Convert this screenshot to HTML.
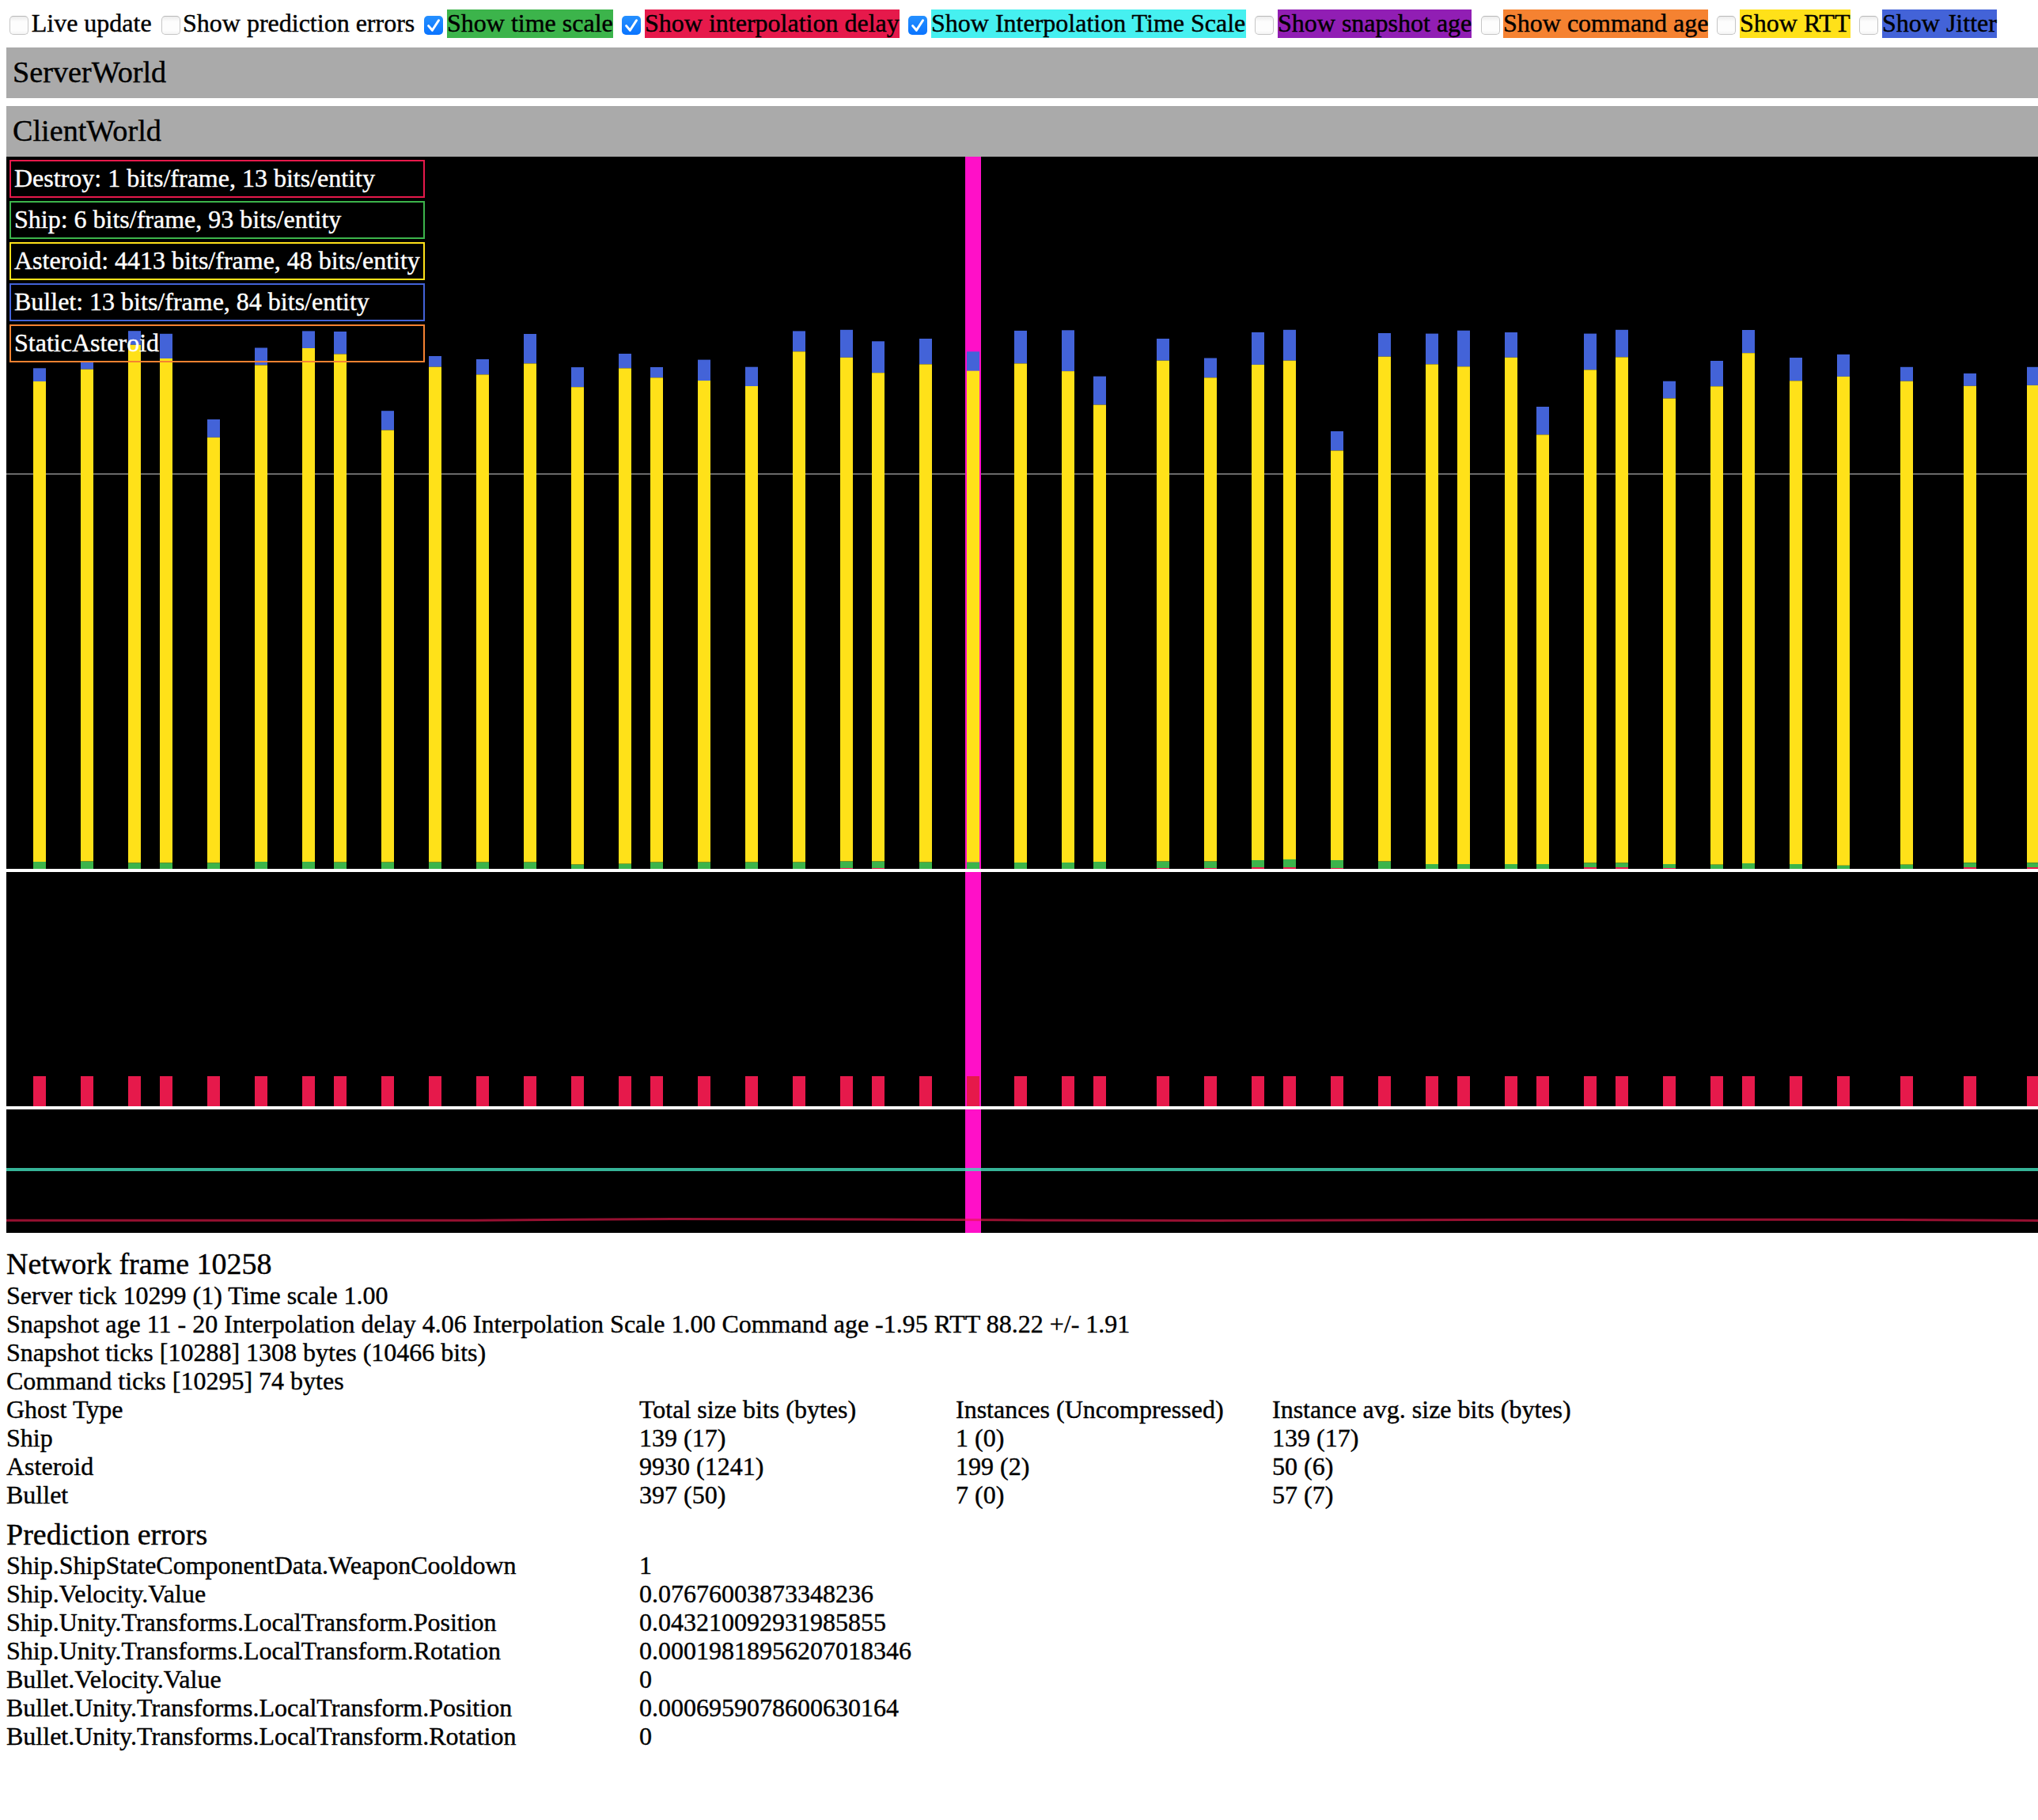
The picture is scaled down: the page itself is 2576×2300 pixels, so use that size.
<!DOCTYPE html>
<html><head><meta charset="utf-8"><title>NetDbg</title>
<style>
html,body{margin:0;padding:0;background:#fff;}
body{width:2576px;height:2300px;position:relative;overflow:hidden;font-family:"Liberation Serif",serif;font-size:32px;color:#000;-webkit-text-stroke:0.4px currentColor;}
.cb{position:absolute;top:20px;width:24px;height:24px;box-sizing:border-box;border-radius:5px;border:1px solid #c6c6c6;border-top-color:#b9b9b9;background:linear-gradient(#ececec,#fdfdfd 30%,#fdfdfd 80%,#f4f4f4);}
.cb.on{border:none;background:linear-gradient(#2590ff,#0a74ff);}
.cb svg{display:block}
.lab{position:absolute;top:12px;height:36px;line-height:34px;white-space:pre;}
.world{position:absolute;left:8px;width:2568px;height:64px;background:#aaaaaa;}
.world span{position:absolute;left:8px;top:9px;font-size:38.2px;line-height:44px;white-space:pre;}
.leg{position:absolute;left:12px;width:525px;height:48px;box-sizing:border-box;border:2px solid;color:#fff;}
.leg span{position:absolute;left:4px;top:3px;line-height:36px;white-space:pre;}
.t{position:absolute;white-space:pre;}
</style></head>
<body>
<div class="cb" style="left:12px"></div>
<div class="lab" style="left:39.7px;">Live update</div>
<div class="cb" style="left:204px"></div>
<div class="lab" style="left:231px;">Show prediction errors</div>
<div class="cb on" style="left:536px"><svg width="24" height="24" viewBox="0 0 24 24"><path d="M5.6 12.6 L10.4 18.3 L18.5 5.8" fill="none" stroke="#fff" stroke-width="3" stroke-linecap="round" stroke-linejoin="round"/></svg></div>
<div class="lab" style="left:565px;background:#3cb44b;width:210px;">Show time scale</div>
<div class="cb on" style="left:786px"><svg width="24" height="24" viewBox="0 0 24 24"><path d="M5.6 12.6 L10.4 18.3 L18.5 5.8" fill="none" stroke="#fff" stroke-width="3" stroke-linecap="round" stroke-linejoin="round"/></svg></div>
<div class="lab" style="left:815px;background:#e6194b;width:322px;">Show interpolation delay</div>
<div class="cb on" style="left:1148px"><svg width="24" height="24" viewBox="0 0 24 24"><path d="M5.6 12.6 L10.4 18.3 L18.5 5.8" fill="none" stroke="#fff" stroke-width="3" stroke-linecap="round" stroke-linejoin="round"/></svg></div>
<div class="lab" style="left:1177px;background:#46f0f0;width:398px;">Show Interpolation Time Scale</div>
<div class="cb" style="left:1586px"></div>
<div class="lab" style="left:1615px;background:#911eb4;width:245px;">Show snapshot age</div>
<div class="cb" style="left:1872px"></div>
<div class="lab" style="left:1900px;background:#f58231;width:259px;">Show command age</div>
<div class="cb" style="left:2170px"></div>
<div class="lab" style="left:2199px;background:#ffe119;width:140px;">Show RTT</div>
<div class="cb" style="left:2350px"></div>
<div class="lab" style="left:2379px;background:#4363d8;width:145px;">Show Jitter</div>
<div class="world" style="top:60px"><span>ServerWorld</span></div>
<div class="world" style="top:134px"><span>ClientWorld</span></div>
<svg width="2568" height="1360" viewBox="8 198 2568 1360" style="position:absolute;left:8px;top:198px;display:block">
<rect x="8" y="198" width="2568" height="1360" fill="#000"/>
<rect x="8" y="598" width="2568" height="2" fill="#6a6a6a"/>
<rect x="1220" y="198" width="20" height="1360" fill="#ff10c8"/>
<rect x="42" y="465.3" width="16" height="16.7" fill="#4363d8"/>
<rect x="42" y="482" width="16" height="607.0" fill="#ffe119"/>
<rect x="42" y="1089" width="16" height="9.0" fill="#3cb44b"/>
<rect x="42" y="1360" width="16" height="38" fill="#e6194b"/>
<rect x="102" y="456" width="16" height="10.7" fill="#4363d8"/>
<rect x="102" y="466.7" width="16" height="621.9" fill="#ffe119"/>
<rect x="102" y="1088.6" width="16" height="9.4" fill="#3cb44b"/>
<rect x="102" y="1360" width="16" height="38" fill="#e6194b"/>
<rect x="162" y="418.2" width="16" height="17.6" fill="#4363d8"/>
<rect x="162" y="435.8" width="16" height="654.7" fill="#ffe119"/>
<rect x="162" y="1090.5" width="16" height="7.5" fill="#3cb44b"/>
<rect x="162" y="1360" width="16" height="38" fill="#e6194b"/>
<rect x="202" y="421.8" width="16" height="31.2" fill="#4363d8"/>
<rect x="202" y="453" width="16" height="637.5" fill="#ffe119"/>
<rect x="202" y="1090.5" width="16" height="7.5" fill="#3cb44b"/>
<rect x="202" y="1360" width="16" height="38" fill="#e6194b"/>
<rect x="262" y="530" width="16" height="22.8" fill="#4363d8"/>
<rect x="262" y="552.8" width="16" height="537.7" fill="#ffe119"/>
<rect x="262" y="1090.5" width="16" height="7.5" fill="#3cb44b"/>
<rect x="262" y="1360" width="16" height="38" fill="#e6194b"/>
<rect x="322" y="439.5" width="16" height="22.0" fill="#4363d8"/>
<rect x="322" y="461.5" width="16" height="627.5" fill="#ffe119"/>
<rect x="322" y="1089" width="16" height="9.0" fill="#3cb44b"/>
<rect x="322" y="1360" width="16" height="38" fill="#e6194b"/>
<rect x="382" y="418.4" width="16" height="21.6" fill="#4363d8"/>
<rect x="382" y="440" width="16" height="649.0" fill="#ffe119"/>
<rect x="382" y="1089" width="16" height="9.0" fill="#3cb44b"/>
<rect x="382" y="1360" width="16" height="38" fill="#e6194b"/>
<rect x="422" y="419" width="16" height="28.5" fill="#4363d8"/>
<rect x="422" y="447.5" width="16" height="642.1" fill="#ffe119"/>
<rect x="422" y="1089.6" width="16" height="8.4" fill="#3cb44b"/>
<rect x="422" y="1360" width="16" height="38" fill="#e6194b"/>
<rect x="482" y="519.2" width="16" height="24.4" fill="#4363d8"/>
<rect x="482" y="543.6" width="16" height="546.0" fill="#ffe119"/>
<rect x="482" y="1089.6" width="16" height="8.4" fill="#3cb44b"/>
<rect x="482" y="1360" width="16" height="38" fill="#e6194b"/>
<rect x="542" y="450" width="16" height="13.7" fill="#4363d8"/>
<rect x="542" y="463.7" width="16" height="625.9" fill="#ffe119"/>
<rect x="542" y="1089.6" width="16" height="8.4" fill="#3cb44b"/>
<rect x="542" y="1360" width="16" height="38" fill="#e6194b"/>
<rect x="602" y="454" width="16" height="19.4" fill="#4363d8"/>
<rect x="602" y="473.4" width="16" height="616.2" fill="#ffe119"/>
<rect x="602" y="1089.6" width="16" height="8.4" fill="#3cb44b"/>
<rect x="602" y="1360" width="16" height="38" fill="#e6194b"/>
<rect x="662" y="422" width="16" height="37.4" fill="#4363d8"/>
<rect x="662" y="459.4" width="16" height="630.2" fill="#ffe119"/>
<rect x="662" y="1089.6" width="16" height="8.4" fill="#3cb44b"/>
<rect x="662" y="1360" width="16" height="38" fill="#e6194b"/>
<rect x="722" y="464.1" width="16" height="25.1" fill="#4363d8"/>
<rect x="722" y="489.2" width="16" height="603.4" fill="#ffe119"/>
<rect x="722" y="1092.6" width="16" height="5.4" fill="#3cb44b"/>
<rect x="722" y="1360" width="16" height="38" fill="#e6194b"/>
<rect x="782" y="447" width="16" height="18.4" fill="#4363d8"/>
<rect x="782" y="465.4" width="16" height="626.3" fill="#ffe119"/>
<rect x="782" y="1091.7" width="16" height="6.3" fill="#3cb44b"/>
<rect x="782" y="1360" width="16" height="38" fill="#e6194b"/>
<rect x="822" y="464" width="16" height="13.3" fill="#4363d8"/>
<rect x="822" y="477.3" width="16" height="612.3" fill="#ffe119"/>
<rect x="822" y="1089.6" width="16" height="8.4" fill="#3cb44b"/>
<rect x="822" y="1360" width="16" height="38" fill="#e6194b"/>
<rect x="882" y="454.6" width="16" height="26.4" fill="#4363d8"/>
<rect x="882" y="481" width="16" height="608.6" fill="#ffe119"/>
<rect x="882" y="1089.6" width="16" height="8.4" fill="#3cb44b"/>
<rect x="882" y="1360" width="16" height="38" fill="#e6194b"/>
<rect x="942" y="463.7" width="16" height="24.3" fill="#4363d8"/>
<rect x="942" y="488" width="16" height="601.6" fill="#ffe119"/>
<rect x="942" y="1089.6" width="16" height="8.4" fill="#3cb44b"/>
<rect x="942" y="1360" width="16" height="38" fill="#e6194b"/>
<rect x="1002" y="418.4" width="16" height="25.9" fill="#4363d8"/>
<rect x="1002" y="444.3" width="16" height="645.3" fill="#ffe119"/>
<rect x="1002" y="1089.6" width="16" height="8.4" fill="#3cb44b"/>
<rect x="1002" y="1360" width="16" height="38" fill="#e6194b"/>
<rect x="1062" y="416.8" width="16" height="35.0" fill="#4363d8"/>
<rect x="1062" y="451.8" width="16" height="636.8" fill="#ffe119"/>
<rect x="1062" y="1088.6" width="16" height="8.4" fill="#3cb44b"/>
<rect x="1062" y="1097" width="16" height="1.0" fill="#e6194b"/>
<rect x="1062" y="1360" width="16" height="38" fill="#e6194b"/>
<rect x="1102" y="431.3" width="16" height="39.9" fill="#4363d8"/>
<rect x="1102" y="471.2" width="16" height="617.4" fill="#ffe119"/>
<rect x="1102" y="1088.6" width="16" height="8.4" fill="#3cb44b"/>
<rect x="1102" y="1097" width="16" height="1.0" fill="#e6194b"/>
<rect x="1102" y="1360" width="16" height="38" fill="#e6194b"/>
<rect x="1162" y="428" width="16" height="32.4" fill="#4363d8"/>
<rect x="1162" y="460.4" width="16" height="629.2" fill="#ffe119"/>
<rect x="1162" y="1089.6" width="16" height="8.4" fill="#3cb44b"/>
<rect x="1162" y="1360" width="16" height="38" fill="#e6194b"/>
<rect x="1222" y="444.3" width="16" height="24.4" fill="#4363d8"/>
<rect x="1222" y="468.7" width="16" height="620.9" fill="#ffe119"/>
<rect x="1222" y="1089.6" width="16" height="8.4" fill="#3cb44b"/>
<rect x="1222" y="1360" width="16" height="38" fill="#e6194b"/>
<rect x="1282" y="417.9" width="16" height="41.5" fill="#4363d8"/>
<rect x="1282" y="459.4" width="16" height="630.6" fill="#ffe119"/>
<rect x="1282" y="1090" width="16" height="8.0" fill="#3cb44b"/>
<rect x="1282" y="1360" width="16" height="38" fill="#e6194b"/>
<rect x="1342" y="417.3" width="16" height="51.8" fill="#4363d8"/>
<rect x="1342" y="469.1" width="16" height="620.9" fill="#ffe119"/>
<rect x="1342" y="1090" width="16" height="8.0" fill="#3cb44b"/>
<rect x="1342" y="1360" width="16" height="38" fill="#e6194b"/>
<rect x="1382" y="475.6" width="16" height="36.0" fill="#4363d8"/>
<rect x="1382" y="511.6" width="16" height="577.4" fill="#ffe119"/>
<rect x="1382" y="1089" width="16" height="9.0" fill="#3cb44b"/>
<rect x="1382" y="1360" width="16" height="38" fill="#e6194b"/>
<rect x="1462" y="428" width="16" height="27.7" fill="#4363d8"/>
<rect x="1462" y="455.7" width="16" height="632.9" fill="#ffe119"/>
<rect x="1462" y="1088.6" width="16" height="8.4" fill="#3cb44b"/>
<rect x="1462" y="1097" width="16" height="1.0" fill="#e6194b"/>
<rect x="1462" y="1360" width="16" height="38" fill="#e6194b"/>
<rect x="1522" y="452.5" width="16" height="24.8" fill="#4363d8"/>
<rect x="1522" y="477.3" width="16" height="611.3" fill="#ffe119"/>
<rect x="1522" y="1088.6" width="16" height="8.4" fill="#3cb44b"/>
<rect x="1522" y="1097" width="16" height="1.0" fill="#e6194b"/>
<rect x="1522" y="1360" width="16" height="38" fill="#e6194b"/>
<rect x="1582" y="419.9" width="16" height="41.0" fill="#4363d8"/>
<rect x="1582" y="460.9" width="16" height="626.1" fill="#ffe119"/>
<rect x="1582" y="1087" width="16" height="9.0" fill="#3cb44b"/>
<rect x="1582" y="1096" width="16" height="2.0" fill="#e6194b"/>
<rect x="1582" y="1360" width="16" height="38" fill="#e6194b"/>
<rect x="1622" y="416.8" width="16" height="38.9" fill="#4363d8"/>
<rect x="1622" y="455.7" width="16" height="630.3" fill="#ffe119"/>
<rect x="1622" y="1086" width="16" height="10.0" fill="#3cb44b"/>
<rect x="1622" y="1096" width="16" height="2.0" fill="#e6194b"/>
<rect x="1622" y="1360" width="16" height="38" fill="#e6194b"/>
<rect x="1682" y="545" width="16" height="24.5" fill="#4363d8"/>
<rect x="1682" y="569.5" width="16" height="517.5" fill="#ffe119"/>
<rect x="1682" y="1087" width="16" height="10.0" fill="#3cb44b"/>
<rect x="1682" y="1097" width="16" height="1.0" fill="#e6194b"/>
<rect x="1682" y="1360" width="16" height="38" fill="#e6194b"/>
<rect x="1742" y="421" width="16" height="29.7" fill="#4363d8"/>
<rect x="1742" y="450.7" width="16" height="637.9" fill="#ffe119"/>
<rect x="1742" y="1088.6" width="16" height="9.4" fill="#3cb44b"/>
<rect x="1742" y="1360" width="16" height="38" fill="#e6194b"/>
<rect x="1802" y="421.6" width="16" height="38.8" fill="#4363d8"/>
<rect x="1802" y="460.4" width="16" height="631.6" fill="#ffe119"/>
<rect x="1802" y="1092" width="16" height="6.0" fill="#3cb44b"/>
<rect x="1802" y="1360" width="16" height="38" fill="#e6194b"/>
<rect x="1842" y="417.7" width="16" height="45.6" fill="#4363d8"/>
<rect x="1842" y="463.3" width="16" height="628.7" fill="#ffe119"/>
<rect x="1842" y="1092" width="16" height="6.0" fill="#3cb44b"/>
<rect x="1842" y="1360" width="16" height="38" fill="#e6194b"/>
<rect x="1902" y="420" width="16" height="31.8" fill="#4363d8"/>
<rect x="1902" y="451.8" width="16" height="640.2" fill="#ffe119"/>
<rect x="1902" y="1092" width="16" height="6.0" fill="#3cb44b"/>
<rect x="1902" y="1360" width="16" height="38" fill="#e6194b"/>
<rect x="1942" y="514" width="16" height="35.4" fill="#4363d8"/>
<rect x="1942" y="549.4" width="16" height="542.6" fill="#ffe119"/>
<rect x="1942" y="1092" width="16" height="6.0" fill="#3cb44b"/>
<rect x="1942" y="1360" width="16" height="38" fill="#e6194b"/>
<rect x="2002" y="421.6" width="16" height="45.8" fill="#4363d8"/>
<rect x="2002" y="467.4" width="16" height="623.1" fill="#ffe119"/>
<rect x="2002" y="1090.5" width="16" height="5.5" fill="#3cb44b"/>
<rect x="2002" y="1096" width="16" height="2.0" fill="#e6194b"/>
<rect x="2002" y="1360" width="16" height="38" fill="#e6194b"/>
<rect x="2042" y="416.8" width="16" height="34.6" fill="#4363d8"/>
<rect x="2042" y="451.4" width="16" height="639.1" fill="#ffe119"/>
<rect x="2042" y="1090.5" width="16" height="5.5" fill="#3cb44b"/>
<rect x="2042" y="1096" width="16" height="2.0" fill="#e6194b"/>
<rect x="2042" y="1360" width="16" height="38" fill="#e6194b"/>
<rect x="2102" y="481.7" width="16" height="21.8" fill="#4363d8"/>
<rect x="2102" y="503.5" width="16" height="588.5" fill="#ffe119"/>
<rect x="2102" y="1092" width="16" height="5.0" fill="#3cb44b"/>
<rect x="2102" y="1097" width="16" height="1.0" fill="#e6194b"/>
<rect x="2102" y="1360" width="16" height="38" fill="#e6194b"/>
<rect x="2162" y="456" width="16" height="32.3" fill="#4363d8"/>
<rect x="2162" y="488.3" width="16" height="604.4" fill="#ffe119"/>
<rect x="2162" y="1092.7" width="16" height="5.3" fill="#3cb44b"/>
<rect x="2162" y="1360" width="16" height="38" fill="#e6194b"/>
<rect x="2202" y="417" width="16" height="29.2" fill="#4363d8"/>
<rect x="2202" y="446.2" width="16" height="644.8" fill="#ffe119"/>
<rect x="2202" y="1091" width="16" height="7.0" fill="#3cb44b"/>
<rect x="2202" y="1360" width="16" height="38" fill="#e6194b"/>
<rect x="2262" y="452" width="16" height="29.3" fill="#4363d8"/>
<rect x="2262" y="481.3" width="16" height="610.7" fill="#ffe119"/>
<rect x="2262" y="1092" width="16" height="6.0" fill="#3cb44b"/>
<rect x="2262" y="1360" width="16" height="38" fill="#e6194b"/>
<rect x="2322" y="447.9" width="16" height="28.0" fill="#4363d8"/>
<rect x="2322" y="475.9" width="16" height="617.9" fill="#ffe119"/>
<rect x="2322" y="1093.8" width="16" height="4.2" fill="#3cb44b"/>
<rect x="2322" y="1360" width="16" height="38" fill="#e6194b"/>
<rect x="2402" y="463.8" width="16" height="17.9" fill="#4363d8"/>
<rect x="2402" y="481.7" width="16" height="611.0" fill="#ffe119"/>
<rect x="2402" y="1092.7" width="16" height="5.3" fill="#3cb44b"/>
<rect x="2402" y="1360" width="16" height="38" fill="#e6194b"/>
<rect x="2482" y="471.9" width="16" height="15.9" fill="#4363d8"/>
<rect x="2482" y="487.8" width="16" height="602.5" fill="#ffe119"/>
<rect x="2482" y="1090.3" width="16" height="5.7" fill="#3cb44b"/>
<rect x="2482" y="1096" width="16" height="2.0" fill="#e6194b"/>
<rect x="2482" y="1360" width="16" height="38" fill="#e6194b"/>
<rect x="2562" y="463.8" width="16" height="23.1" fill="#4363d8"/>
<rect x="2562" y="486.9" width="16" height="603.4" fill="#ffe119"/>
<rect x="2562" y="1090.3" width="16" height="5.7" fill="#3cb44b"/>
<rect x="2562" y="1096" width="16" height="2.0" fill="#e6194b"/>
<rect x="2562" y="1360" width="16" height="38" fill="#e6194b"/>
<rect x="8" y="1098" width="2568" height="4" fill="#fff"/>
<rect x="8" y="1398" width="2568" height="4" fill="#fff"/>
<rect x="8" y="1476" width="2568" height="4" fill="#3cb44b" fill-opacity="0.6"/>
<rect x="8" y="1476" width="2568" height="4" fill="#46f0f0" fill-opacity="0.55"/>
<polyline points="8,1542.3 600,1542.3 720,1541.3 850,1540.4 1100,1541 1300,1541.9 1535,1542.5 1940,1541.2 2400,1541.4 2576,1542.5" fill="none" stroke="#e6194b" stroke-opacity="0.65" stroke-width="3" shape-rendering="geometricPrecision"/>
</svg>
<div class="leg" style="top:202px;border-color:#e6194b"><span>Destroy: 1 bits/frame, 13 bits/entity</span></div>
<div class="leg" style="top:254px;border-color:#3cb44b"><span>Ship: 6 bits/frame, 93 bits/entity</span></div>
<div class="leg" style="top:306px;border-color:#ffe119"><span>Asteroid: 4413 bits/frame, 48 bits/entity</span></div>
<div class="leg" style="top:358px;border-color:#4363d8"><span>Bullet: 13 bits/frame, 84 bits/entity</span></div>
<div class="leg" style="top:410px;border-color:#f58231"><span>StaticAsteroid</span></div>
<div class="t" style="left:8px;top:1575px;font-size:38px;line-height:44px">Network frame 10258</div>
<div class="t" style="left:8px;top:1619px;font-size:32px;line-height:36px">Server tick 10299 (1) Time scale 1.00</div>
<div class="t" style="left:8px;top:1655px;font-size:32px;line-height:36px">Snapshot age 11 - 20 Interpolation delay 4.06 Interpolation Scale 1.00 Command age -1.95 RTT 88.22 +/- 1.91</div>
<div class="t" style="left:8px;top:1691px;font-size:32px;line-height:36px">Snapshot ticks [10288] 1308 bytes (10466 bits)</div>
<div class="t" style="left:8px;top:1727px;font-size:32px;line-height:36px">Command ticks [10295] 74 bytes</div>
<div class="t" style="left:8px;top:1763px;font-size:32px;line-height:36px">Ghost Type</div>
<div class="t" style="left:808px;top:1763px;font-size:32px;line-height:36px">Total size bits (bytes)</div>
<div class="t" style="left:1208px;top:1763px;font-size:32px;line-height:36px">Instances (Uncompressed)</div>
<div class="t" style="left:1608px;top:1763px;font-size:32px;line-height:36px">Instance avg. size bits (bytes)</div>
<div class="t" style="left:8px;top:1799px;font-size:32px;line-height:36px">Ship</div>
<div class="t" style="left:808px;top:1799px;font-size:32px;line-height:36px">139 (17)</div>
<div class="t" style="left:1208px;top:1799px;font-size:32px;line-height:36px">1 (0)</div>
<div class="t" style="left:1608px;top:1799px;font-size:32px;line-height:36px">139 (17)</div>
<div class="t" style="left:8px;top:1835px;font-size:32px;line-height:36px">Asteroid</div>
<div class="t" style="left:808px;top:1835px;font-size:32px;line-height:36px">9930 (1241)</div>
<div class="t" style="left:1208px;top:1835px;font-size:32px;line-height:36px">199 (2)</div>
<div class="t" style="left:1608px;top:1835px;font-size:32px;line-height:36px">50 (6)</div>
<div class="t" style="left:8px;top:1871px;font-size:32px;line-height:36px">Bullet</div>
<div class="t" style="left:808px;top:1871px;font-size:32px;line-height:36px">397 (50)</div>
<div class="t" style="left:1208px;top:1871px;font-size:32px;line-height:36px">7 (0)</div>
<div class="t" style="left:1608px;top:1871px;font-size:32px;line-height:36px">57 (7)</div>
<div class="t" style="left:8px;top:1917px;font-size:38px;line-height:44px">Prediction errors</div>
<div class="t" style="left:8px;top:1960px;font-size:32px;line-height:36px">Ship.ShipStateComponentData.WeaponCooldown</div>
<div class="t" style="left:808px;top:1960px;font-size:32px;line-height:36px">1</div>
<div class="t" style="left:8px;top:1996px;font-size:32px;line-height:36px">Ship.Velocity.Value</div>
<div class="t" style="left:808px;top:1996px;font-size:32px;line-height:36px">0.07676003873348236</div>
<div class="t" style="left:8px;top:2032px;font-size:32px;line-height:36px">Ship.Unity.Transforms.LocalTransform.Position</div>
<div class="t" style="left:808px;top:2032px;font-size:32px;line-height:36px">0.043210092931985855</div>
<div class="t" style="left:8px;top:2068px;font-size:32px;line-height:36px">Ship.Unity.Transforms.LocalTransform.Rotation</div>
<div class="t" style="left:808px;top:2068px;font-size:32px;line-height:36px">0.00019818956207018346</div>
<div class="t" style="left:8px;top:2104px;font-size:32px;line-height:36px">Bullet.Velocity.Value</div>
<div class="t" style="left:808px;top:2104px;font-size:32px;line-height:36px">0</div>
<div class="t" style="left:8px;top:2140px;font-size:32px;line-height:36px">Bullet.Unity.Transforms.LocalTransform.Position</div>
<div class="t" style="left:808px;top:2140px;font-size:32px;line-height:36px">0.0006959078600630164</div>
<div class="t" style="left:8px;top:2176px;font-size:32px;line-height:36px">Bullet.Unity.Transforms.LocalTransform.Rotation</div>
<div class="t" style="left:808px;top:2176px;font-size:32px;line-height:36px">0</div>
</body></html>
